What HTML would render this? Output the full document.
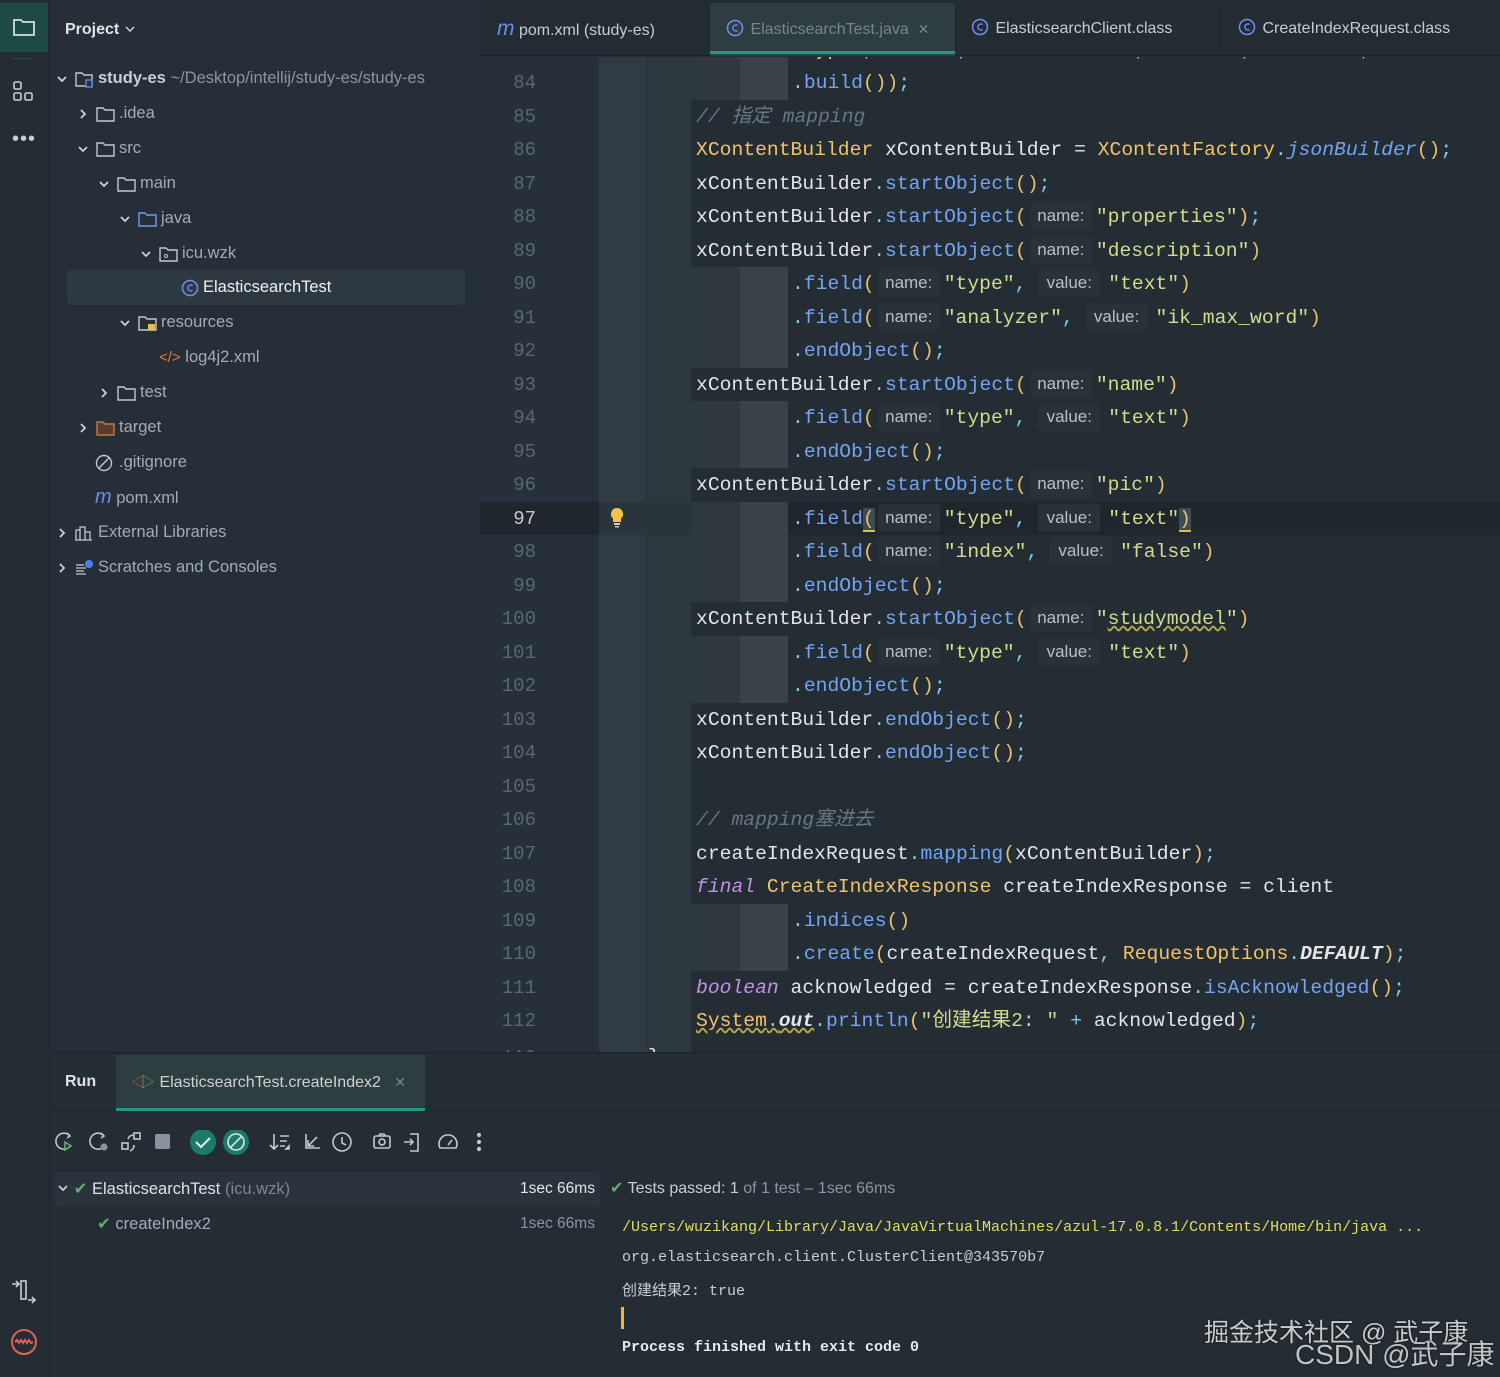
<!DOCTYPE html>
<html><head><meta charset="utf-8">
<style>
*{margin:0;padding:0;box-sizing:border-box}
body{width:1500px;height:1377px;background:#252d35;position:relative;overflow:hidden;font-family:"Liberation Sans","Noto Sans CJK SC",sans-serif;color:#dfe2e6}
.abs{position:absolute}
.mono{font-family:"Liberation Mono","Noto Sans CJK SC",monospace}
#strip{left:0;top:0;width:50px;height:1377px;background:#242c34;border-right:1px solid #1d242a}
#proj{left:50px;top:0;width:430px;height:1052px;background:#262f37}
.tr{position:absolute;height:35px;line-height:35px;font-size:16.5px;color:#a3abb4;white-space:nowrap}
.tr svg{vertical-align:middle;margin-right:2px}
.tr svg.cv{margin-right:6px}
#tabs{left:480px;top:0;width:1020px;height:56px;background:#242c33;border-bottom:1px solid #1c2228}
.tab{position:absolute;top:0;height:56px;line-height:58px;font-size:16px;color:#c7ccd2;white-space:nowrap}
.ln{position:absolute;left:480px;width:56px;text-align:right;font-size:19px;color:#5b6670;height:34px;line-height:34px}
.cl{position:absolute;height:34px;line-height:34px;font-size:19.7px;white-space:pre;color:#e3e5e8}
.m{color:#74a4f2}.s{color:#d2dc8e}.c{color:#f0c36a}.p{color:#e7c06d}.k{color:#c590e6;font-style:italic}.cm{color:#6b7580;font-style:italic}.d{color:#86c9e8}.it{font-style:italic}
.h{display:inline-block;font-family:"Liberation Sans",sans-serif;font-size:17px;color:#b9bfc7;background:#2a3238;height:28px;line-height:28px;vertical-align:1px;text-align:center;border-radius:3px}
.hn{width:62px;margin:0 4px 0 3px}
.hv{width:62px;margin:0 8px 0 0}
</style></head><body>
<div class="abs" style="left:0;top:0;width:720px;height:3px;background:linear-gradient(90deg,#5a3a3a,#7a3a3a 60%,#3a3030)"></div>

<div id="strip" class="abs">
 <div class="abs" style="left:0;top:3px;width:48px;height:49px;background:#1e4a45"></div>
 <svg class="abs" style="left:12px;top:17px" width="24" height="20" viewBox="0 0 24 20"><path d="M2 3h7l2 2h11v13H2z" fill="none" stroke="#d5dde0" stroke-width="1.8"/></svg>
 <div class="abs" style="left:12px;top:58px;width:22px;height:1px;background:#3a444c"></div>
 <svg class="abs" style="left:12px;top:80px" width="24" height="24" viewBox="0 0 24 24" fill="none" stroke="#c8ced4" stroke-width="1.6"><rect x="2" y="2" width="7" height="7" rx="1.5"/><rect x="2" y="13" width="7" height="7" rx="1.5"/><rect x="13" y="13" width="7" height="7" rx="1.5"/></svg>
 <div class="abs" style="left:12px;top:128px;font-size:20px;color:#c8ced4;letter-spacing:1px">•••</div>
 <svg class="abs" style="left:10px;top:1278px" width="28" height="26" viewBox="0 0 28 26" fill="none" stroke="#c8ced4" stroke-width="1.6"><path d="M2 6h6M6 3l3 3-3 3"/><rect x="11" y="3" width="5" height="18"/><path d="M18 22h7M22 19l3 3-3 3"/></svg>
 <svg class="abs" style="left:9px;top:1327px" width="30" height="30" viewBox="0 0 30 30" fill="none" stroke="#e0605a" stroke-width="2"><circle cx="15" cy="15" r="12"/><path d="M6 15l2-2 2 3 2-3 2 3 2-3 2 3 2-3 2 3 2-1"/></svg>
</div>

<div id="proj" class="abs">
 <div class="abs" style="left:15px;top:21px;font-size:16px;font-weight:bold;color:#dfe3e7">Project <svg width="12" height="10" style="vertical-align:0"><path d="M2 3l4 4 4-4" fill="none" stroke="#cfd4d9" stroke-width="1.5"/></svg></div>
 <div class="abs" style="left:17px;top:270px;width:398px;height:35px;background:#2e3840;border-radius:4px"></div>
</div>

<!-- tree -->
<div class="tr" style="left:56px;top:61px"><svg class="cv" width="12" height="12"><path d="M2 4l4 4 4-4" fill="none" stroke="#cfd4d9" stroke-width="1.7"/></svg><svg width="22" height="18"><path d="M2 3h6l2 2h8v11H2z" fill="none" stroke="#c2c8ce" stroke-width="1.4"/><rect x="12" y="10" width="6" height="7" fill="#262f37" stroke="#5b8cf0" stroke-width="1.4"/></svg><b style="color:#c9ced4">study-es</b> <span style="color:#8c959e">~/Desktop/intellij/study-es/study-es</span></div>
<div class="tr" style="left:77px;top:96px"><svg class="cv" width="12" height="12"><path d="M4 2l4 4-4 4" fill="none" stroke="#cfd4d9" stroke-width="1.7"/></svg><svg width="22" height="18"><path d="M2 3h6l2 2h9v11H2z" fill="none" stroke="#c2c8ce" stroke-width="1.4"/></svg>.idea</div>
<div class="tr" style="left:77px;top:131px"><svg class="cv" width="12" height="12"><path d="M2 4l4 4 4-4" fill="none" stroke="#cfd4d9" stroke-width="1.7"/></svg><svg width="22" height="18"><path d="M2 3h6l2 2h9v11H2z" fill="none" stroke="#c2c8ce" stroke-width="1.4"/></svg>src</div>
<div class="tr" style="left:98px;top:166px"><svg class="cv" width="12" height="12"><path d="M2 4l4 4 4-4" fill="none" stroke="#cfd4d9" stroke-width="1.7"/></svg><svg width="22" height="18"><path d="M2 3h6l2 2h9v11H2z" fill="none" stroke="#c2c8ce" stroke-width="1.4"/></svg>main</div>
<div class="tr" style="left:119px;top:201px"><svg class="cv" width="12" height="12"><path d="M2 4l4 4 4-4" fill="none" stroke="#cfd4d9" stroke-width="1.7"/></svg><svg width="22" height="18"><path d="M2 3h6l2 2h9v11H2z" fill="none" stroke="#6f9cf0" stroke-width="1.4"/></svg>java</div>
<div class="tr" style="left:140px;top:236px"><svg class="cv" width="12" height="12"><path d="M2 4l4 4 4-4" fill="none" stroke="#cfd4d9" stroke-width="1.7"/></svg><svg width="22" height="18"><path d="M2 3h6l2 2h9v11H2z" fill="none" stroke="#c2c8ce" stroke-width="1.4"/><circle cx="8" cy="11" r="1.6" fill="none" stroke="#c2c8ce"/></svg>icu.wzk</div>
<div class="tr" style="left:181px;top:270px;color:#eef0f2"><svg width="20" height="18"><circle cx="9" cy="9" r="7.5" fill="none" stroke="#6f8ff0" stroke-width="1.5"/><path d="M11.5 6.5a3 3 0 1 0 0 5" fill="none" stroke="#6f8ff0" stroke-width="1.4"/></svg>ElasticsearchTest</div>
<div class="tr" style="left:119px;top:305px"><svg class="cv" width="12" height="12"><path d="M2 4l4 4 4-4" fill="none" stroke="#cfd4d9" stroke-width="1.7"/></svg><svg width="22" height="18"><path d="M2 3h6l2 2h9v11H2z" fill="none" stroke="#c2c8ce" stroke-width="1.4"/><rect x="11" y="10" width="7" height="6" fill="#e3c14b"/></svg>resources</div>
<div class="tr" style="left:159px;top:340px"><span style="color:#e07a3c;font-size:15px">&lt;/&gt;</span> log4j2.xml</div>
<div class="tr" style="left:98px;top:375px"><svg class="cv" width="12" height="12"><path d="M4 2l4 4-4 4" fill="none" stroke="#cfd4d9" stroke-width="1.7"/></svg><svg width="22" height="18"><path d="M2 3h6l2 2h9v11H2z" fill="none" stroke="#c2c8ce" stroke-width="1.4"/></svg>test</div>
<div class="tr" style="left:77px;top:410px"><svg class="cv" width="12" height="12"><path d="M4 2l4 4-4 4" fill="none" stroke="#cfd4d9" stroke-width="1.7"/></svg><svg width="22" height="18"><path d="M2 3h6l2 2h9v11H2z" fill="#5a3c2c" stroke="#c0794a" stroke-width="1.4"/></svg>target</div>
<div class="tr" style="left:95px;top:445px"><svg width="22" height="18"><circle cx="9" cy="9" r="7.5" fill="none" stroke="#c2c8ce" stroke-width="1.4"/><path d="M4 14L14 4" stroke="#c2c8ce" stroke-width="1.4"/></svg>.gitignore</div>
<div class="tr" style="left:95px;top:480px"><span style="color:#6a8ef0;font-style:italic;font-size:20px">m</span> pom.xml</div>
<div class="tr" style="left:56px;top:515px"><svg class="cv" width="12" height="12"><path d="M4 2l4 4-4 4" fill="none" stroke="#cfd4d9" stroke-width="1.7"/></svg><svg width="22" height="18"><path d="M2 16V6h4v10M6 16V3h5v13M11 16V8h5v8M1 16h17" fill="none" stroke="#c2c8ce" stroke-width="1.3"/></svg>External Libraries</div>
<div class="tr" style="left:56px;top:550px"><svg class="cv" width="12" height="12"><path d="M4 2l4 4-4 4" fill="none" stroke="#cfd4d9" stroke-width="1.7"/></svg><svg width="22" height="18"><path d="M2 6h8M2 9h10M2 12h8M2 15h10" stroke="#c2c8ce" stroke-width="1.3"/><circle cx="15" cy="5" r="4" fill="#4a7ff0"/></svg>Scratches and Consoles</div>

<!-- editor gutter columns -->
<div class="abs" style="left:480px;top:57px;width:119px;height:995px;background:#27303a"></div>
<div class="abs" style="left:599px;top:57px;width:46px;height:995px;background:#303b43"></div>
<div class="abs" style="left:645px;top:57px;width:46px;height:995px;background:#2d383e"></div>
<div class="abs" style="left:691px;top:57px;width:809px;height:995px;background:#252d34"></div>

<div class="abs" style="left:691px;top:57px;width:49px;height:43px;background:#2e383e"></div>
<div class="abs" style="left:740px;top:57px;width:48px;height:43px;background:#394347"></div>
<div class="abs" style="left:691px;top:267px;width:49px;height:101px;background:#2e383e"></div>
<div class="abs" style="left:740px;top:267px;width:48px;height:101px;background:#394347"></div>
<div class="abs" style="left:691px;top:401px;width:49px;height:67px;background:#2e383e"></div>
<div class="abs" style="left:740px;top:401px;width:48px;height:67px;background:#394347"></div>
<div class="abs" style="left:480px;top:502px;width:1020px;height:33px;background:#1f262c"></div>
<div class="abs" style="left:599px;top:502px;width:92px;height:33px;background:#2a343b"></div>
<div class="abs" style="left:691px;top:502px;width:49px;height:100px;background:#2e383e"></div>
<div class="abs" style="left:740px;top:502px;width:48px;height:100px;background:#394347"></div>
<div class="abs" style="left:691px;top:636px;width:49px;height:67px;background:#2e383e"></div>
<div class="abs" style="left:740px;top:636px;width:48px;height:67px;background:#394347"></div>
<div class="abs" style="left:691px;top:904px;width:49px;height:67px;background:#2e383e"></div>
<div class="abs" style="left:740px;top:904px;width:48px;height:67px;background:#394347"></div>

<!-- partial line 83 -->
<div class="abs mono" style="left:792px;top:57px;height:8px;overflow:hidden;width:700px"><div style="margin-top:-24px;font-size:19.7px;line-height:34px;white-space:pre;color:#d2dc8e">"type", "text", "ik_max_word", "index", "false" ;</div></div>

<!-- tabs -->
<div id="tabs" class="abs"></div>
<div class="abs" style="left:710px;top:3px;width:245px;height:53px;background:#2e3d40"></div>
<div class="abs" style="left:710px;top:51px;width:245px;height:3px;background:#1f9a86"></div>
<div class="abs" style="left:955px;top:8px;width:1px;height:44px;background:#1d242a"></div>
<div class="abs" style="left:1220px;top:8px;width:1px;height:44px;background:#1d242a"></div>
<div class="tab" style="left:497px"><span style="color:#6a8ef0;font-style:italic;font-size:21px">m</span> pom.xml (study-es)</div>
<div class="tab" style="left:726px;color:#7a848d"><svg width="20" height="18" style="vertical-align:-3px"><circle cx="9" cy="9" r="7.5" fill="none" stroke="#6f8ff0" stroke-width="1.5"/><path d="M11.5 6.5a3 3 0 1 0 0 5" fill="none" stroke="#6f8ff0" stroke-width="1.4"/></svg> ElasticsearchTest.java &nbsp;<span style="font-size:14px">✕</span></div>
<div class="tab" style="left:971px"><svg width="20" height="18" style="vertical-align:-3px"><circle cx="9" cy="9" r="7.5" fill="none" stroke="#6f8ff0" stroke-width="1.5"/><path d="M11.5 6.5a3 3 0 1 0 0 5" fill="none" stroke="#6f8ff0" stroke-width="1.4"/></svg> ElasticsearchClient.class</div>
<div class="tab" style="left:1238px"><svg width="20" height="18" style="vertical-align:-3px"><circle cx="9" cy="9" r="7.5" fill="none" stroke="#6f8ff0" stroke-width="1.5"/><path d="M11.5 6.5a3 3 0 1 0 0 5" fill="none" stroke="#6f8ff0" stroke-width="1.4"/></svg> CreateIndexRequest.class</div>

<!-- line numbers -->
<div class="ln mono" style="top:66px">84</div>
<div class="ln mono" style="top:99.5px">85</div>
<div class="ln mono" style="top:133px">86</div>
<div class="ln mono" style="top:166.5px">87</div>
<div class="ln mono" style="top:200px">88</div>
<div class="ln mono" style="top:233.5px">89</div>
<div class="ln mono" style="top:267px">90</div>
<div class="ln mono" style="top:300.5px">91</div>
<div class="ln mono" style="top:334px">92</div>
<div class="ln mono" style="top:367.5px">93</div>
<div class="ln mono" style="top:401px">94</div>
<div class="ln mono" style="top:434.5px">95</div>
<div class="ln mono" style="top:468px">96</div>
<div class="ln mono" style="top:501.5px;color:#c4c9ce">97</div>
<div class="ln mono" style="top:535px">98</div>
<div class="ln mono" style="top:568.5px">99</div>
<div class="ln mono" style="top:602px">100</div>
<div class="ln mono" style="top:635.5px">101</div>
<div class="ln mono" style="top:669px">102</div>
<div class="ln mono" style="top:702.5px">103</div>
<div class="ln mono" style="top:736px">104</div>
<div class="ln mono" style="top:769.5px">105</div>
<div class="ln mono" style="top:803px">106</div>
<div class="ln mono" style="top:836.5px">107</div>
<div class="ln mono" style="top:870px">108</div>
<div class="ln mono" style="top:903.5px">109</div>
<div class="ln mono" style="top:937px">110</div>
<div class="ln mono" style="top:970.5px">111</div>
<div class="ln mono" style="top:1004px">112</div>
<div class="abs mono" style="left:480px;top:1041px;width:56px;height:11px;overflow:hidden;text-align:right;font-size:19px;color:#5b6670;line-height:34px">113</div>

<svg class="abs" style="left:609px;top:507px" width="16" height="22" viewBox="0 0 16 22"><path d="M8 1a6 6 0 0 0-4 10.5V15h8v-3.5A6 6 0 0 0 8 1z" fill="#f2c24a"/><rect x="5" y="16" width="6" height="2" fill="#c8ccd0"/><rect x="6" y="19" width="4" height="1.5" fill="#c8ccd0"/></svg>

<!-- code -->
<div class="cl mono" style="left:792px;top:66px"><span class="d">.</span><span class="m">build</span><span class="p">())</span><span class="d">;</span></div>
<div class="cl mono" style="left:696px;top:99.5px"><span class="cm">// 指定 mapping</span></div>
<div class="cl mono" style="left:696px;top:133px"><span class="c">XContentBuilder</span> xContentBuilder = <span class="c">XContentFactory</span><span class="d">.</span><span class="m it">jsonBuilder</span><span class="p">()</span><span class="d">;</span></div>
<div class="cl mono" style="left:696px;top:166.5px">xContentBuilder<span class="d">.</span><span class="m">startObject</span><span class="p">()</span><span class="d">;</span></div>
<div class="cl mono" style="left:696px;top:200px">xContentBuilder<span class="d">.</span><span class="m">startObject</span><span class="p">(</span><span class="h hn">name:</span><span class="s">"properties"</span><span class="p">)</span><span class="d">;</span></div>
<div class="cl mono" style="left:696px;top:233.5px">xContentBuilder<span class="d">.</span><span class="m">startObject</span><span class="p">(</span><span class="h hn">name:</span><span class="s">"description"</span><span class="p">)</span></div>
<div class="cl mono" style="left:792px;top:267px"><span class="d">.</span><span class="m">field</span><span class="p">(</span><span class="h hn">name:</span><span class="s">"type"</span><span class="d">,</span> <span class="h hv">value:</span><span class="s">"text"</span><span class="p">)</span></div>
<div class="cl mono" style="left:792px;top:300.5px"><span class="d">.</span><span class="m">field</span><span class="p">(</span><span class="h hn">name:</span><span class="s">"analyzer"</span><span class="d">,</span> <span class="h hv">value:</span><span class="s">"ik_max_word"</span><span class="p">)</span></div>
<div class="cl mono" style="left:792px;top:334px"><span class="d">.</span><span class="m">endObject</span><span class="p">()</span><span class="d">;</span></div>
<div class="cl mono" style="left:696px;top:367.5px">xContentBuilder<span class="d">.</span><span class="m">startObject</span><span class="p">(</span><span class="h hn">name:</span><span class="s">"name"</span><span class="p">)</span></div>
<div class="cl mono" style="left:792px;top:401px"><span class="d">.</span><span class="m">field</span><span class="p">(</span><span class="h hn">name:</span><span class="s">"type"</span><span class="d">,</span> <span class="h hv">value:</span><span class="s">"text"</span><span class="p">)</span></div>
<div class="cl mono" style="left:792px;top:434.5px"><span class="d">.</span><span class="m">endObject</span><span class="p">()</span><span class="d">;</span></div>
<div class="cl mono" style="left:696px;top:468px">xContentBuilder<span class="d">.</span><span class="m">startObject</span><span class="p">(</span><span class="h hn">name:</span><span class="s">"pic"</span><span class="p">)</span></div>
<div class="cl mono" style="left:792px;top:501.5px"><span class="d">.</span><span class="m">field</span><span class="p" style="background:#3d4d55;border-bottom:2px solid #e7b94a">(</span><span class="h hn">name:</span><span class="s">"type"</span><span class="d">,</span> <span class="h hv">value:</span><span class="s">"text"</span><span class="p" style="background:#3d4d55;border-bottom:2px solid #e7b94a">)</span></div>
<div class="cl mono" style="left:792px;top:535px"><span class="d">.</span><span class="m">field</span><span class="p">(</span><span class="h hn">name:</span><span class="s">"index"</span><span class="d">,</span> <span class="h hv">value:</span><span class="s">"false"</span><span class="p">)</span></div>
<div class="cl mono" style="left:792px;top:568.5px"><span class="d">.</span><span class="m">endObject</span><span class="p">()</span><span class="d">;</span></div>
<div class="cl mono" style="left:696px;top:602px">xContentBuilder<span class="d">.</span><span class="m">startObject</span><span class="p">(</span><span class="h hn">name:</span><span class="s">"<span style="text-decoration:underline wavy #b8a94a">studymodel</span>"</span><span class="p">)</span></div>
<div class="cl mono" style="left:792px;top:635.5px"><span class="d">.</span><span class="m">field</span><span class="p">(</span><span class="h hn">name:</span><span class="s">"type"</span><span class="d">,</span> <span class="h hv">value:</span><span class="s">"text"</span><span class="p">)</span></div>
<div class="cl mono" style="left:792px;top:669px"><span class="d">.</span><span class="m">endObject</span><span class="p">()</span><span class="d">;</span></div>
<div class="cl mono" style="left:696px;top:702.5px">xContentBuilder<span class="d">.</span><span class="m">endObject</span><span class="p">()</span><span class="d">;</span></div>
<div class="cl mono" style="left:696px;top:736px">xContentBuilder<span class="d">.</span><span class="m">endObject</span><span class="p">()</span><span class="d">;</span></div>
<div class="cl mono" style="left:696px;top:803px"><span class="cm">// mapping塞进去</span></div>
<div class="cl mono" style="left:696px;top:836.5px">createIndexRequest<span class="d">.</span><span class="m">mapping</span><span class="p">(</span>xContentBuilder<span class="p">)</span><span class="d">;</span></div>
<div class="cl mono" style="left:696px;top:870px"><span class="k">final</span> <span class="c">CreateIndexResponse</span> createIndexResponse = client</div>
<div class="cl mono" style="left:792px;top:903.5px"><span class="d">.</span><span class="m">indices</span><span class="p">()</span></div>
<div class="cl mono" style="left:792px;top:937px"><span class="d">.</span><span class="m">create</span><span class="p">(</span>createIndexRequest<span class="d">,</span> <span class="c">RequestOptions</span><span class="d">.</span><b class="it">DEFAULT</b><span class="p">)</span><span class="d">;</span></div>
<div class="cl mono" style="left:696px;top:970.5px"><span class="k">boolean</span> acknowledged = createIndexResponse<span class="d">.</span><span class="m">isAcknowledged</span><span class="p">()</span><span class="d">;</span></div>
<div class="cl mono" style="left:696px;top:1004px"><span class="c" style="text-decoration:underline wavy #b8a94a">System<span class="d">.</span><b class="it" style="color:#e3e5e8">out</b></span><span class="d">.</span><span class="m">println</span><span class="p">(</span><span class="s">"创建结果2: "</span> <span class="d">+</span> acknowledged<span class="p">)</span><span class="d">;</span></div>
<div class="abs mono" style="left:648px;top:1040px;height:12px;overflow:hidden;font-size:19.7px;line-height:34px;color:#e3e5e8">}</div>

<!-- run panel -->
<div class="abs" style="left:50px;top:1052px;width:1450px;height:325px;background:#252d34;border-top:1px solid #1c2228"></div>
<div class="abs" style="left:50px;top:1110px;width:1450px;height:1px;background:#1e252b"></div>
<div class="abs" style="left:65px;top:1073px;font-size:16px;font-weight:bold;color:#dfe3e7">Run</div>
<div class="abs" style="left:116px;top:1055px;width:309px;height:55px;background:#2e3d40"></div>
<div class="abs" style="left:116px;top:1108px;width:309px;height:3px;background:#1f9a86"></div>
<div class="abs" style="left:131px;top:1072px;font-size:16px;color:#cdd2d7;white-space:nowrap"><span style="color:#d0605a;font-size:14px">&#9665;</span><span style="color:#5fa860;font-size:14px;margin-left:-4px">&#9655;</span> ElasticsearchTest.createIndex2 &nbsp;&nbsp;<span style="color:#7a848d;font-size:14px">✕</span></div>

<svg class="abs" style="left:54px;top:1130px" width="440" height="26" viewBox="0 0 440 26" fill="none" stroke="#c2c8ce" stroke-width="1.6">
 <path d="M16 6a8 8 0 1 0 1 9"/><path d="M13 3l3 3-3 2"/><path d="M11 12l6 4-6 4z" stroke="#5fae6a"/>
 <path d="M50 6a8 8 0 1 0 1 9"/><path d="M47 3l3 3-3 2"/><circle cx="50" cy="17" r="3.5" fill="#8a939b" stroke="none"/>
 <rect x="68" y="13" width="6" height="6"/><rect x="80" y="3" width="6" height="6"/><path d="M74 9a6 6 0 0 1 5-4M80 15a6 6 0 0 1-4 6"/>
 <rect x="101" y="4" width="15" height="15" rx="2" fill="#8a939b" stroke="none"/>
 <circle cx="149" cy="12" r="13" fill="#1c7a68" stroke="none"/><path d="M142 12l5 5 9-9" stroke="#e8f0ee" stroke-width="2"/>
 <circle cx="182" cy="12" r="13" fill="#1c7a68" stroke="none"/><circle cx="182" cy="12" r="8" stroke="#d8e6e2"/><path d="M176 18l12-12" stroke="#d8e6e2"/>
 <path d="M220 4v15M216 15l4 4 4-4M226 6h9M226 11h7M226 16h5"/><path d="M232 19l3-3v3z" fill="#c2c8ce"/>
 <path d="M252 4v14h14M254 16l9-9M254 10v6h6"/>
 <circle cx="288" cy="12" r="9"/><path d="M288 7v6l4 2"/>
 <rect x="320" y="6" width="16" height="12" rx="2"/><circle cx="328" cy="12" r="3"/><path d="M325 6l1-2h4l1 2"/>
 <path d="M356 4h8v17h-8M350 12h9M356 9l3 3-3 3"/>
 <path d="M386 18a9 9 0 1 1 16 0z"/><path d="M394 15l4-5"/>
 <circle cx="425" cy="5" r="1.3" fill="#c2c8ce"/><circle cx="425" cy="12" r="1.3" fill="#c2c8ce"/><circle cx="425" cy="19" r="1.3" fill="#c2c8ce"/>
</svg>

<div class="abs" style="left:55px;top:1172px;width:545px;height:35px;background:#2a333b;border-radius:4px"></div>
<div class="abs" style="left:57px;top:1179px;font-size:16.5px;color:#dfe3e7;white-space:nowrap"><svg width="12" height="12" style="vertical-align:0"><path d="M2 4l4 4 4-4" fill="none" stroke="#cfd4d9" stroke-width="1.7"/></svg> <span style="color:#5fb06a">&#10004;</span> ElasticsearchTest <span style="color:#7d8690">(icu.wzk)</span></div>
<div class="abs" style="left:520px;top:1180px;font-size:15.5px;color:#e3e6e9">1sec 66ms</div>
<div class="abs" style="left:97px;top:1214px;font-size:16.5px;color:#a3abb4"><span style="color:#5fb06a">&#10004;</span> createIndex2</div>
<div class="abs" style="left:520px;top:1215px;font-size:15.5px;color:#8c959e">1sec 66ms</div>
<div class="abs" style="left:610px;top:1178px;font-size:16px;color:#c9ced4;white-space:nowrap"><span style="color:#5fb06a">&#10004;</span> Tests passed: 1 <span style="color:#8c959e">of 1 test – 1sec 66ms</span></div>
<div class="abs" style="left:610px;top:1210px;width:890px;height:1px;background:#1f262c"></div>

<div class="abs mono" style="left:622px;top:1219px;font-size:15px;color:#e2dd5e;white-space:pre">/Users/wuzikang/Library/Java/JavaVirtualMachines/azul-17.0.8.1/Contents/Home/bin/java ...</div>
<div class="abs mono" style="left:622px;top:1249px;font-size:15px;color:#c9ced4;white-space:pre">org.elasticsearch.client.ClusterClient@343570b7</div>
<div class="abs mono" style="left:622px;top:1279px;font-size:15px;color:#c9ced4;white-space:pre">创建结果2: true</div>
<div class="abs" style="left:621px;top:1307px;width:3px;height:22px;background:#e7b93a"></div>
<div class="abs mono" style="left:622px;top:1339px;font-size:15px;color:#e6e9ec;white-space:pre;font-weight:bold">Process finished with exit code 0</div>

<div class="abs" style="left:1204px;top:1313px;font-size:25px;color:#c8ccd0;white-space:nowrap;text-shadow:0 0 2px #111">掘金技术社区 @ 武子康</div>
<div class="abs" style="left:1295px;top:1333px;font-size:28px;color:#bfc3c7;white-space:nowrap;text-shadow:0 0 2px #111">CSDN @武子康</div>
</body></html>
